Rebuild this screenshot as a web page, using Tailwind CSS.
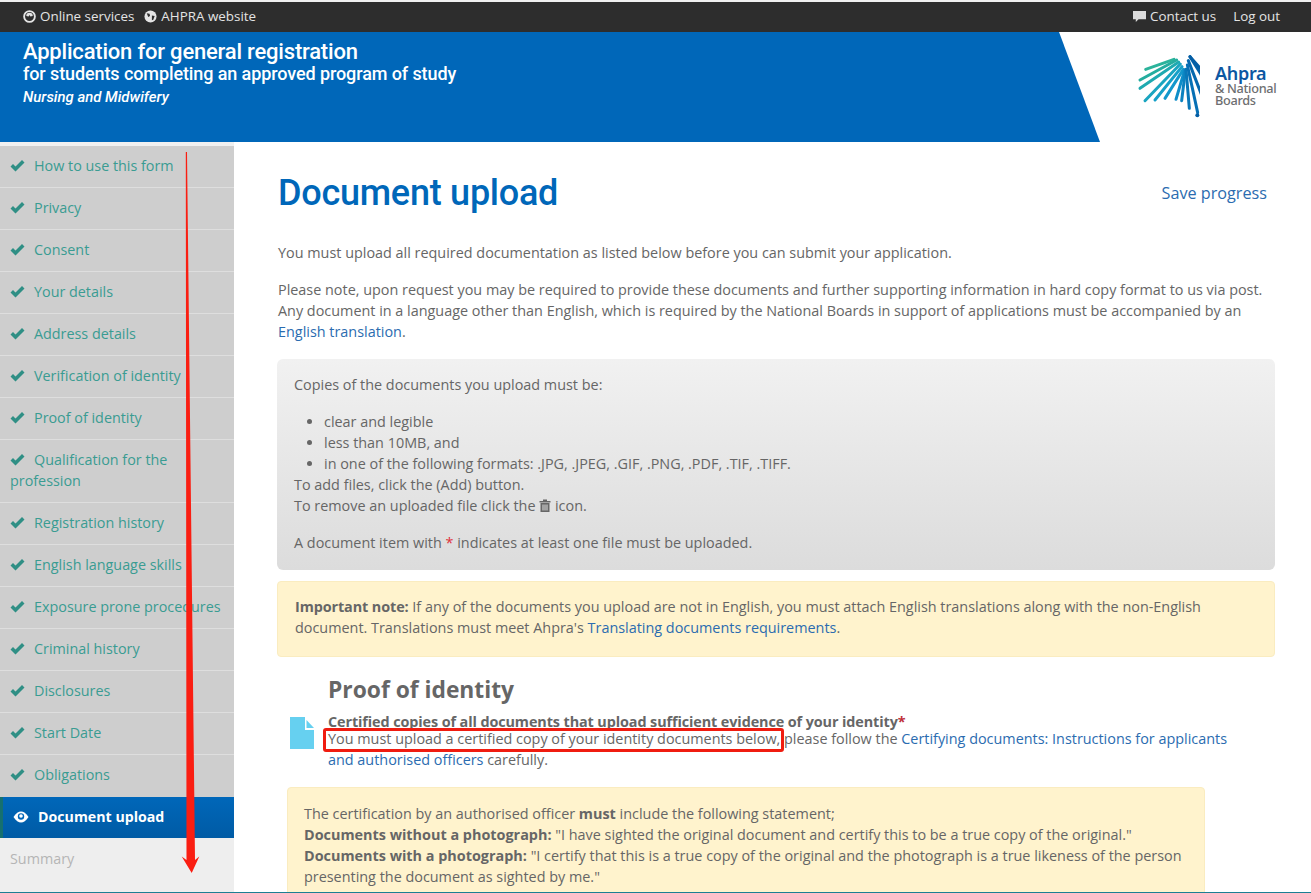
<!DOCTYPE html>
<html lang="en">
<head>
<meta charset="utf-8">
<title>Document upload</title>
<script src="https://cdn.jsdelivr.net/npm/@tailwindcss/browser@4"></script>
</head>
<body class="bg-white">
<div class="relative h-[893px] w-[1311px] overflow-hidden bg-white font-['Open_Sans',sans-serif] text-[14.4px] leading-[21px] text-[#666]">
  <div class="h-[2px] bg-[#f0f0f0]"></div>
  <header class="flex h-[30px] items-center justify-between bg-[#2d2d2d] pb-[2px] pl-[23px] pr-[31px] text-[13.4px] text-[#e4e4e4]">
    <div class="flex items-center gap-[10px]">
      <span class="flex items-center gap-[4px]"><svg class="h-[13px] w-[13px]" viewBox="0 0 14 14"><circle cx="7" cy="7" r="5.8" fill="none" stroke="#e4e4e4" stroke-width="2"/><path d="M3.500 6.500a3.500 3.500 0 0 1 7 0l-2.500.6-1-1.600-1 1.600z" fill="#e4e4e4"/></svg>Online services</span>
      <span class="flex items-center gap-[4px]"><svg class="h-[13px] w-[13px]" viewBox="0 0 14 14"><circle cx="7" cy="7" r="6.500" fill="#e4e4e4"/><path d="M3 3.500l3 .5 .5 2.500-2 1zM8.500 6l3 .5-1.500 4-1.500 .5z" fill="#2d2d2d"/></svg>AHPRA website</span>
    </div>
    <div class="flex items-center gap-[17px]">
      <span class="flex items-center gap-[4px]"><svg class="h-[13px] w-[13px]" viewBox="0 0 14 14"><path d="M0 1h14v9H6l-3 3v-3H0z" fill="#dcdcdc"/></svg>Contact us</span>
      <span>Log out</span>
    </div>
  </header>
  <div class="flex h-[110px]">
    <div class="h-full w-[1100px] shrink-0 bg-[#0067b9] pl-[23px] pt-[7px] text-white [clip-path:polygon(0_0,1059px_0,1100px_100%,0_100%)] font-['Roboto',sans-serif]">
      <h1 class="text-[22px] font-medium leading-[26px] tracking-[-0.2px]">Application for general registration</h1>
      <p class="text-[18px] font-medium leading-[18px] tracking-[-0.1px]">for students completing an approved program of study</p>
      <p class="mt-[5px] text-[14.900px] font-medium italic leading-[18px]">Nursing and Midwifery</p>
    </div>
    <div class="flex flex-1 items-start">
      <svg class="mt-[8px] h-[90px] w-[100px] shrink-0" viewBox="0 0 300 270" fill="none" stroke-linecap="round" stroke-width="9">
        <path d="M137 88L222 58" stroke="#2bb39b"/>
        <path d="M120 120L230 60" stroke="#25ad9f"/>
        <path d="M120 145L236 66" stroke="#1faab0"/>
        <path d="M135 182L241 72" stroke="#1aa5c0"/>
        <path d="M165 180L246 80" stroke="#16a0c8"/>
        <path d="M195 175L250 88" stroke="#1297cc"/>
        <path d="M228 178L254 90" stroke="#0e8dc8"/>
        <path d="M245 182L256 92" stroke="#0b82c0"/>
        <path d="M268 205L258 88" stroke="#0877b8"/>
        <path d="M293 218L262 75" stroke="#0670b5"/>
        <path d="M310 178L265 62" stroke="#0568ae"/>
        <path d="M325 138L270 50" stroke="#0462a8"/>
        <path d="M305 90L270 50" stroke="#045ea5"/>
        <circle cx="292" cy="226" r="6" fill="#045ea5"/>
      </svg>
      <div class="ml-[15px] mt-[32px] flex flex-col font-['Noto_Sans',sans-serif]">
        <span class="text-[18px] font-semibold leading-[18px] tracking-[-0.3px] text-[#0c57a2]">Ahpra</span>
        <span class="text-[12.700px] font-medium leading-[12px] tracking-[-0.3px] text-[#6d6e70]">&amp; National</span>
        <span class="text-[12.700px] font-medium leading-[12px] tracking-[-0.3px] text-[#6d6e70]">Boards</span>
      </div>
    </div>
  </div>
  <div class="flex">
    <nav class="w-[234px] shrink-0 border-t-[4px] border-[#f0f0f0] bg-[#cecece] text-[14.35px] text-[#3a9c92]">
      <div class="h-[42px] border-b border-[#dedede] pl-[10px] pt-[9px]"><svg class="mr-[9px] inline h-[12px] w-[15px] align-[-1px]" viewBox="0 0 15 12"><path d="M0.500 6.500L3 4l2.500 2.500L12 0l2.500 2.500L5.500 11.500z" fill="#2f8f85"/></svg>How to use this form</div>
      <div class="h-[42px] border-b border-[#dedede] pl-[10px] pt-[9px]"><svg class="mr-[9px] inline h-[12px] w-[15px] align-[-1px]" viewBox="0 0 15 12"><path d="M0.500 6.500L3 4l2.500 2.500L12 0l2.500 2.500L5.500 11.500z" fill="#2f8f85"/></svg>Privacy</div>
      <div class="h-[42px] border-b border-[#dedede] pl-[10px] pt-[9px]"><svg class="mr-[9px] inline h-[12px] w-[15px] align-[-1px]" viewBox="0 0 15 12"><path d="M0.500 6.500L3 4l2.500 2.500L12 0l2.500 2.500L5.500 11.500z" fill="#2f8f85"/></svg>Consent</div>
      <div class="h-[42px] border-b border-[#dedede] pl-[10px] pt-[9px]"><svg class="mr-[9px] inline h-[12px] w-[15px] align-[-1px]" viewBox="0 0 15 12"><path d="M0.500 6.500L3 4l2.500 2.500L12 0l2.500 2.500L5.500 11.500z" fill="#2f8f85"/></svg>Your details</div>
      <div class="h-[42px] border-b border-[#dedede] pl-[10px] pt-[9px]"><svg class="mr-[9px] inline h-[12px] w-[15px] align-[-1px]" viewBox="0 0 15 12"><path d="M0.500 6.500L3 4l2.500 2.500L12 0l2.500 2.500L5.500 11.500z" fill="#2f8f85"/></svg>Address details</div>
      <div class="h-[42px] border-b border-[#dedede] pl-[10px] pt-[9px]"><svg class="mr-[9px] inline h-[12px] w-[15px] align-[-1px]" viewBox="0 0 15 12"><path d="M0.500 6.500L3 4l2.500 2.500L12 0l2.500 2.500L5.500 11.500z" fill="#2f8f85"/></svg>Verification of identity</div>
      <div class="h-[42px] border-b border-[#dedede] pl-[10px] pt-[9px]"><svg class="mr-[9px] inline h-[12px] w-[15px] align-[-1px]" viewBox="0 0 15 12"><path d="M0.500 6.500L3 4l2.500 2.500L12 0l2.500 2.500L5.500 11.500z" fill="#2f8f85"/></svg>Proof of identity</div>
      <div class="h-[63px] border-b border-[#dedede] pl-[10px] pr-[40px] pt-[9px]"><svg class="mr-[9px] inline h-[12px] w-[15px] align-[-1px]" viewBox="0 0 15 12"><path d="M0.500 6.500L3 4l2.500 2.500L12 0l2.500 2.500L5.500 11.500z" fill="#2f8f85"/></svg>Qualification for the profession</div>
      <div class="h-[42px] border-b border-[#dedede] pl-[10px] pt-[9px]"><svg class="mr-[9px] inline h-[12px] w-[15px] align-[-1px]" viewBox="0 0 15 12"><path d="M0.500 6.500L3 4l2.500 2.500L12 0l2.500 2.500L5.500 11.500z" fill="#2f8f85"/></svg>Registration history</div>
      <div class="h-[42px] border-b border-[#dedede] pl-[10px] pt-[9px]"><svg class="mr-[9px] inline h-[12px] w-[15px] align-[-1px]" viewBox="0 0 15 12"><path d="M0.500 6.500L3 4l2.500 2.500L12 0l2.500 2.500L5.500 11.500z" fill="#2f8f85"/></svg>English language skills</div>
      <div class="h-[42px] border-b border-[#dedede] pl-[10px] pt-[9px]"><svg class="mr-[9px] inline h-[12px] w-[15px] align-[-1px]" viewBox="0 0 15 12"><path d="M0.500 6.500L3 4l2.500 2.500L12 0l2.500 2.500L5.500 11.500z" fill="#2f8f85"/></svg>Exposure prone procedures</div>
      <div class="h-[42px] border-b border-[#dedede] pl-[10px] pt-[9px]"><svg class="mr-[9px] inline h-[12px] w-[15px] align-[-1px]" viewBox="0 0 15 12"><path d="M0.500 6.500L3 4l2.500 2.500L12 0l2.500 2.500L5.500 11.500z" fill="#2f8f85"/></svg>Criminal history</div>
      <div class="h-[42px] border-b border-[#dedede] pl-[10px] pt-[9px]"><svg class="mr-[9px] inline h-[12px] w-[15px] align-[-1px]" viewBox="0 0 15 12"><path d="M0.500 6.500L3 4l2.500 2.500L12 0l2.500 2.500L5.500 11.500z" fill="#2f8f85"/></svg>Disclosures</div>
      <div class="h-[42px] border-b border-[#dedede] pl-[10px] pt-[9px]"><svg class="mr-[9px] inline h-[12px] w-[15px] align-[-1px]" viewBox="0 0 15 12"><path d="M0.500 6.500L3 4l2.500 2.500L12 0l2.500 2.500L5.500 11.500z" fill="#2f8f85"/></svg>Start Date</div>
      <div class="h-[42px] pl-[10px] pt-[9px]"><svg class="mr-[9px] inline h-[12px] w-[15px] align-[-1px]" viewBox="0 0 15 12"><path d="M0.500 6.500L3 4l2.500 2.500L12 0l2.500 2.500L5.500 11.500z" fill="#2f8f85"/></svg>Obligations</div>
      <div class="h-[41px] border-l-[3px] border-[#16706f] bg-gradient-to-b from-[#0067b9] to-[#005ba5] pl-[10px] pt-[9px] text-[14.2px] font-bold text-white"><svg class="mr-[9px] inline h-[12px] w-[16px] align-[-1px]" viewBox="0 0 16 12"><path d="M0.500 6C3 2 5.500 .5 8 .5S13 2 15.500 6C13 10 10.500 11.500 8 11.500S3 10 .5 6z" fill="#fff"/><circle cx="8" cy="5.500" r="3.200" fill="#0067b9"/><circle cx="8" cy="5" r="1.800" fill="#fff"/></svg>Document upload</div>
      <div class="h-[55px] bg-[#eeeeee] pl-[10px] pt-[10px] text-[#b5b5b5]">Summary</div>
    </nav>
    <main class="min-w-0 flex-1 pl-[43px] pr-[36px] pt-[30px]">
      <div class="flex items-center justify-between pr-[8px]">
        <h2 class="pl-[1px] font-['Roboto',sans-serif] text-[36px] font-medium leading-[42px] tracking-[-0.25px] text-[#0067b9]">Document upload</h2>
        <a class="text-[16.2px] text-[#2b6cb0]">Save progress</a>
      </div>
      <p class="mt-[28px] pl-[1px]">You must upload all required documentation as listed below before you can submit your application.</p>
      <p class="mt-[16px] pl-[1px]">Please note, upon request you may be required to provide these documents and further supporting information in hard copy format to us via post. Any document in a language other than English, which is required by the National Boards in support of applications must be accompanied by an <a class="text-[#2b6cb0]">English translation</a>.</p>
      <section class="mt-[17px] h-[211px] rounded-[6px] bg-gradient-to-b from-[#f1f1f1] to-[#dcdcdc] px-[17px] pt-[15px]">
        <p>Copies of the documents you upload must be:</p>
        <ul class="mt-[16px] list-disc pl-[30px]">
          <li>clear and legible</li>
          <li>less than 10MB, and</li>
          <li>in one of the following formats: .JPG, .JPEG, .GIF, .PNG, .PDF, .TIF, .TIFF.</li>
        </ul>
        <p>To add files, click the (Add) button.</p>
        <p>To remove an uploaded file click the <svg class="inline h-[13px] w-[12px] align-[-1px]" viewBox="0 0 12 13"><path d="M0.500 2h11v1.500H.5zM4 .5h4V2H4zM1.500 4h9v9h-9z" fill="#666"/><path d="M4 5.500v6M6 5.500v6M8 5.500v6" stroke="#dedede" stroke-width="1"/></svg> icon.</p>
        <p class="mt-[16px]">A document item with <span class="text-[#e0313a]">*</span> indicates at least one file must be uploaded.</p>
      </section>
      <section class="mt-[11px] h-[76px] rounded-[4px] border border-[#faecc0] bg-[#fff3cd] px-[17px] pt-[14px]">
        <p><b class="font-bold tracking-[-0.1px]">Important note:</b> If any of the documents you upload are not in English, you must attach English translations along with the non-English document. Translations must meet Ahpra's <a class="text-[#2b6cb0]">Translating documents requirements</a>.</p>
      </section>
      <div class="relative mt-[18px] pl-[51px]">
        <h3 class="text-[22.800px] font-bold leading-[30px]">Proof of identity</h3>
        <svg class="absolute left-[13px] top-[42px] h-[32px] w-[24px]" viewBox="0 0 24 32"><path d="M0 0h15v13h9v19H0z" fill="#66d0f0"/><path d="M16.500 3l7.500 8h-7.500z" fill="#66d0f0"/></svg>
        <p class="mt-[10px] font-bold leading-[13px] tracking-[-0.1px]">Certified copies of all documents that upload sufficient evidence of your identity<span class="text-[#c0313a]">*</span></p>
        <p class="pr-[30px]">You must upload a certified copy of your identity documents below, please follow the <a class="text-[#2b6cb0]">Certifying documents: Instructions for applicants and authorised officers</a> carefully.</p>
      </div>
      <section class="ml-[10px] mt-[17px] h-[140px] w-[918px] rounded-[4px] border border-[#faecc0] bg-[#fff3cd] px-[16px] pt-[15px]">
        <p>The certification by an authorised officer <b class="font-bold">must</b> include the following statement;</p>
        <p><b class="font-bold">Documents without a photograph:</b> "I have sighted the original document and certify this to be a true copy of the original."</p>
        <p><b class="font-bold">Documents with a photograph:</b> "I certify that this is a true copy of the original and the photograph is a true likeness of the person presenting the document as sighted by me."</p>
      </section>
    </main>
  </div>
  <div class="absolute bottom-0 left-0 h-[1px] w-full bg-[#1c7f93]"></div>
  <div class="absolute left-[323px] top-[728px] h-[24px] w-[461px] rounded-[3px] border-[3px] border-[#f01c10]"></div>
  <svg class="absolute left-[180px] top-[150px] h-[725px] w-[20px]" viewBox="0 0 20 725"><path d="M5.800 2L7 2L15 710L19.300 706.500L11.700 723L1.700 706.500L6.500 710z" fill="#fa1e12"/></svg>
</div>
</body>
</html>
